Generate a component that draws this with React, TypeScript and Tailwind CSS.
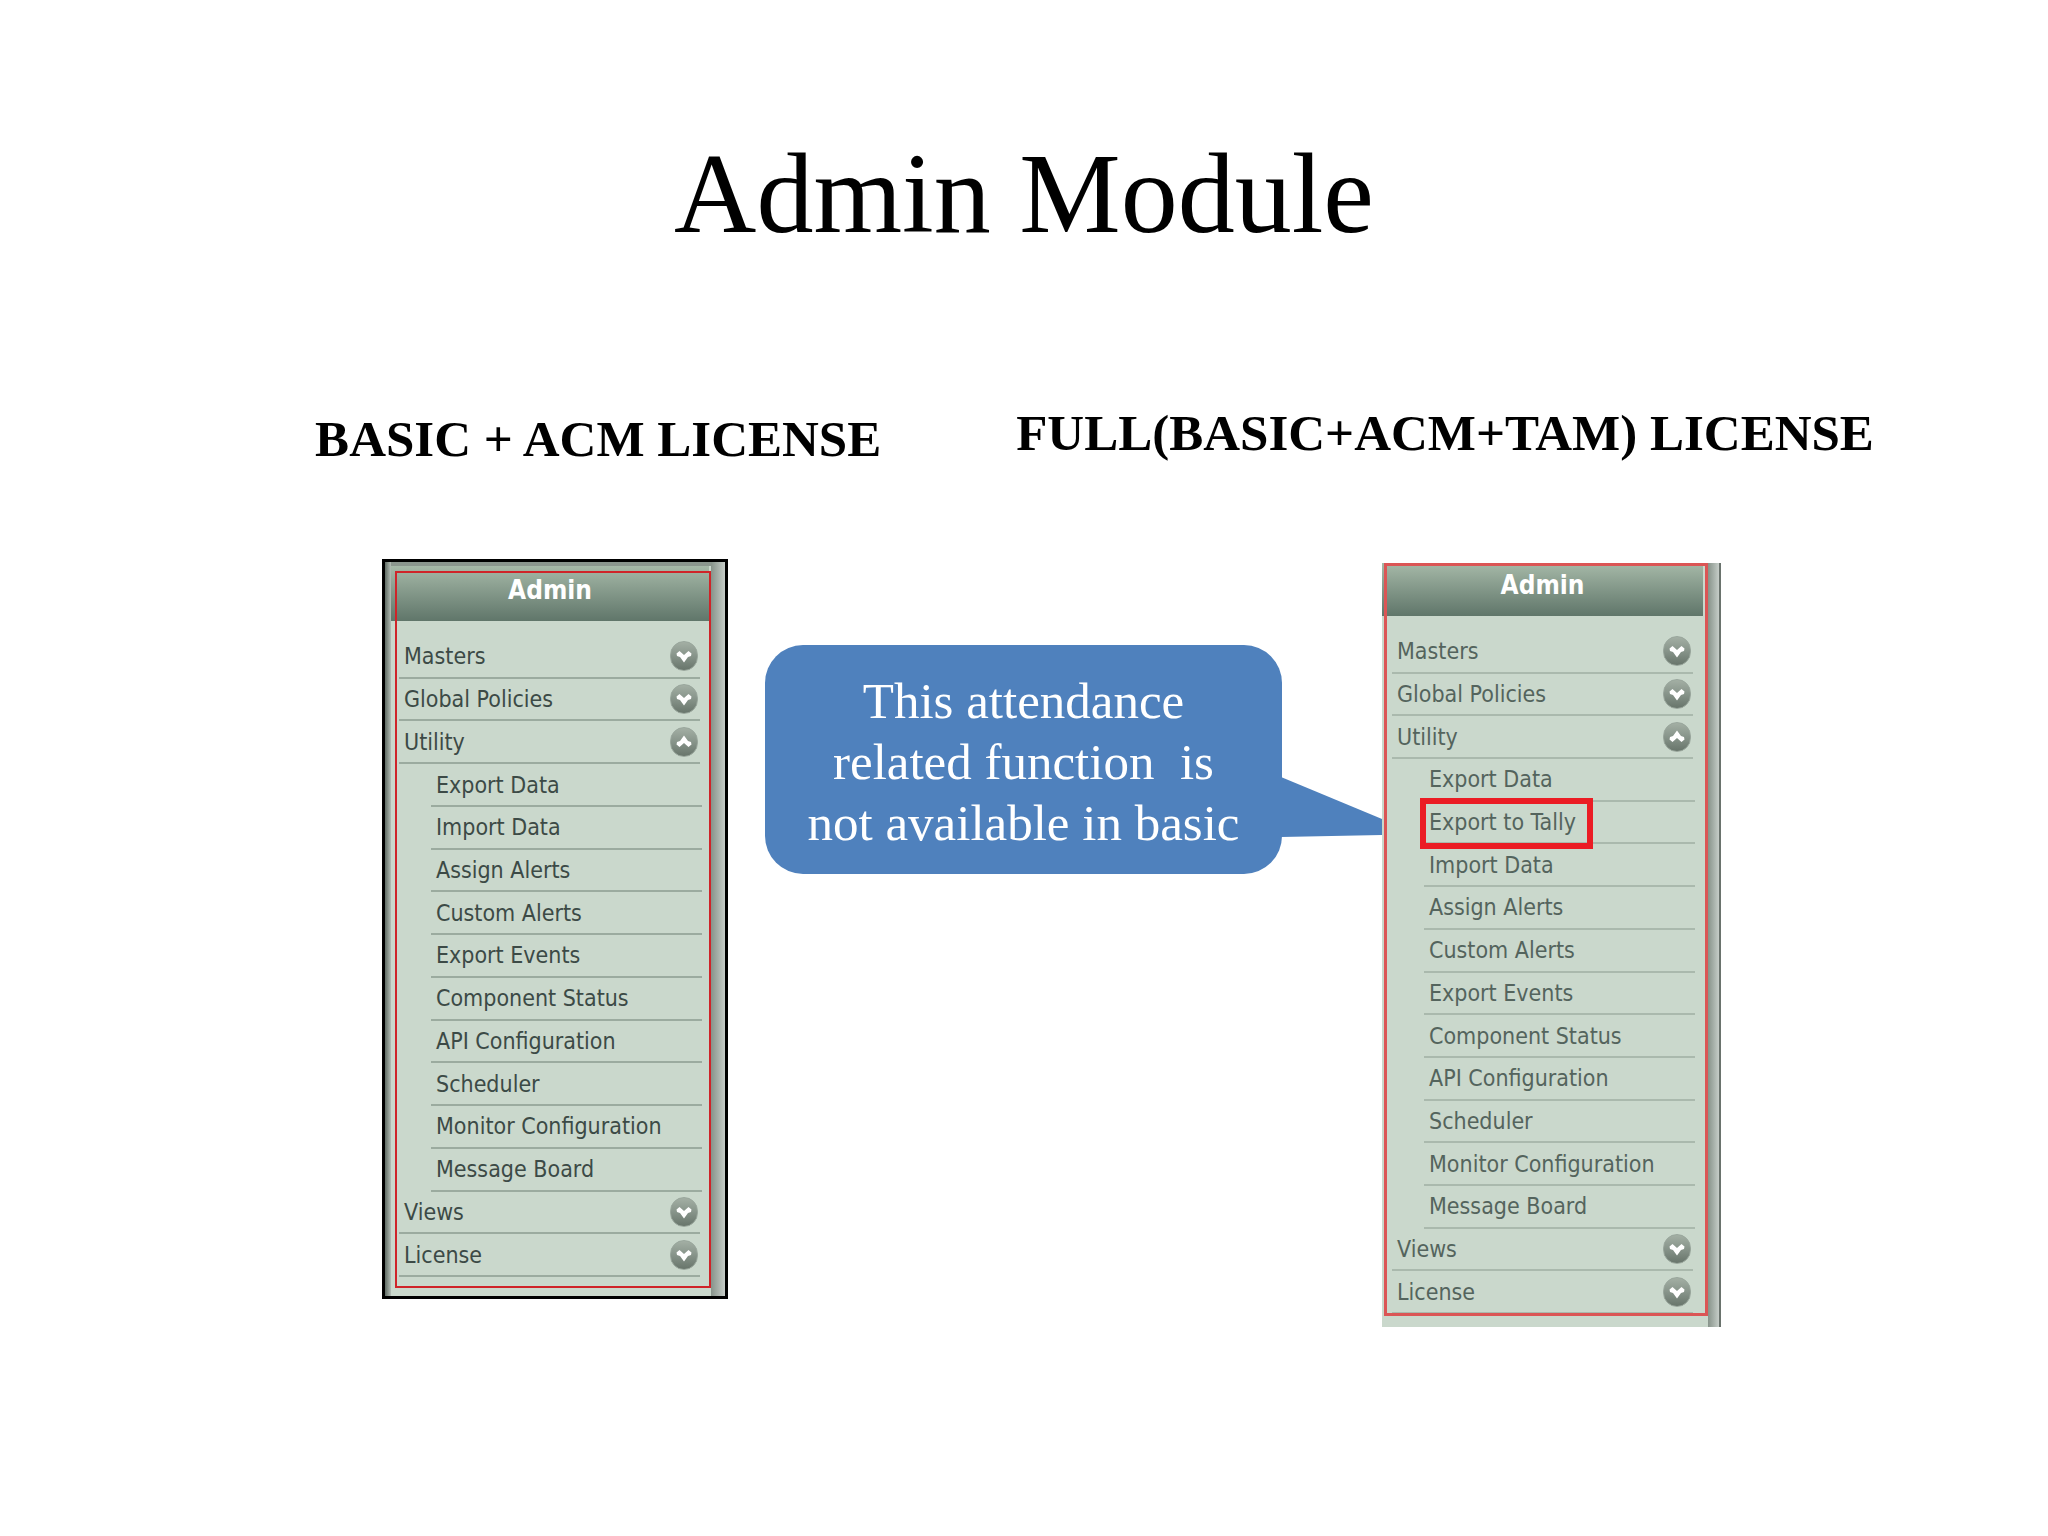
import { clsx } from "clsx";

type MenuItem = {
  label: string;
  kind: "group" | "child";
  open?: boolean;
  highlighted?: boolean;
};

const basicMenu: MenuItem[] = [
  { label: "Masters", kind: "group" },
  { label: "Global Policies", kind: "group" },
  { label: "Utility", kind: "group", open: true },
  { label: "Export Data", kind: "child" },
  { label: "Import Data", kind: "child" },
  { label: "Assign Alerts", kind: "child" },
  { label: "Custom Alerts", kind: "child" },
  { label: "Export Events", kind: "child" },
  { label: "Component Status", kind: "child" },
  { label: "API Configuration", kind: "child" },
  { label: "Scheduler", kind: "child" },
  { label: "Monitor Configuration", kind: "child" },
  { label: "Message Board", kind: "child" },
  { label: "Views", kind: "group" },
  { label: "License", kind: "group" },
];

const fullMenu: MenuItem[] = [
  ...basicMenu.slice(0, 4),
  { label: "Export to Tally", kind: "child", highlighted: true },
  ...basicMenu.slice(4),
];

function ToggleIcon({ open }: { open?: boolean }) {
  return (
    <svg
      viewBox="0 0 26 28"
      className="h-[30px] w-7 rounded-full border border-[#99a69c] bg-linear-to-b from-[#a3afa4] via-[#87948a] to-[#68756b]"
      aria-hidden="true"
    >
      <path
        d="M5.500 11.500 L8.500 9 L13 13 L17.500 9 L20.500 11.500 L20 14 L17 15 L13 20.500 L9 15 L6 14 Z"
        fill="#fff"
        transform={open ? "rotate(180 13 14)" : undefined}
      />
    </svg>
  );
}

function MenuRow({ item }: { item: MenuItem }) {
  if (item.kind === "group") {
    return (
      <li className="mr-[2px] border-b-2 border-inherit">
        <button
          type="button"
          aria-expanded={!!item.open}
          className="flex h-full w-full items-center justify-between pr-[2px] pl-[5px]"
        >
          <span>{item.label}</span>
          <ToggleIcon open={item.open} />
        </button>
      </li>
    );
  }

  return (
    <li className="relative ml-8 flex items-center border-b-2 border-inherit">
      <a href="#" className="pl-[5px]">
        {item.label}
      </a>
      {item.highlighted && <span className="absolute -top-1 -left-1 h-[51px] w-[173px] border-6 border-[#eb1c24]" />}
    </li>
  );
}

function MenuList({ items, className }: { items: MenuItem[]; className: string }) {
  return (
    <ul
      className={clsx(
        "grid w-[303px] auto-rows-fr font-['DejaVu_Sans_Condensed','DejaVu_Sans',sans-serif] text-[23px] leading-7 [font-stretch:condensed]",
        className,
      )}
    >
      {items.map((item) => (
        <MenuRow key={item.label} item={item} />
      ))}
    </ul>
  );
}

const panelTitle =
  "bg-linear-to-b from-[#a6b9a8] to-[#60766a] text-center font-['DejaVu_Sans_Condensed','DejaVu_Sans',sans-serif] text-[26px] font-bold text-white";

function BasicPanel() {
  return (
    <nav
      aria-label="Basic license menu"
      className="relative flex h-[740px] w-[346px] shrink-0 border-[3px] border-black bg-[#cad8cc]"
    >
      <div className="w-[6px] bg-linear-to-r from-[#5f6b63] to-[#b4beb6]" />
      <div className="flex-1 border-t-4 border-[#8b968e]">
        <h3 className={clsx(panelTitle, "mr-[2px] h-[55px] leading-[48px]")}>Admin</h3>
        <MenuList items={basicMenu} className="mt-[15px] ml-2 h-[641px] border-[#9bab9f] text-[#3c4a46]" />
      </div>
      <div className="w-[14px] bg-linear-to-r from-[#87938a] to-[#c6cdc8]" />
      <div className="pointer-events-none absolute top-[9px] left-[10px] h-[717px] w-[316px] border-2 border-[#cf2429]" />
    </nav>
  );
}

function FullPanel() {
  return (
    <nav aria-label="Full license menu" className="relative mt-1 flex h-[764px] w-[339px] shrink-0 bg-[#cad8cc]">
      <div className="flex-1">
        <h3 className={clsx(panelTitle, "mr-[5px] h-[53px] leading-[44px]")}>Admin</h3>
        <MenuList items={fullMenu} className="mt-[15px] ml-[10px] h-[683px] border-[#aab9ad] text-[#54645d]" />
      </div>
      <div className="w-[11px] bg-linear-to-r from-[#87938a] to-[#c6cdc8]" />
      <div className="w-[2px] bg-[#6a736d]" />
      <div className="pointer-events-none absolute top-0 left-[2px] h-[753px] w-[324px] border-[3px] border-[#db5555]" />
    </nav>
  );
}

function Callout() {
  return (
    <div className="relative mt-[86px] mr-[100px] ml-[37px] h-[229px] w-[517px] shrink-0 rounded-[38px] bg-[#4f81bd] pt-[26px] text-center text-[51px] leading-[61px] whitespace-pre text-white">
      <p>{"This attendance\nrelated function  is\nnot available in basic"}</p>
      <svg viewBox="0 0 101 60" className="absolute top-[132px] left-full -ml-px h-[60px] w-[101px]" aria-hidden="true">
        <path d="M0 0 L101 42 L101 58 L0 60 Z" fill="#4f81bd" />
      </svg>
    </div>
  );
}

export default function App() {
  return (
    <main className="min-h-screen w-full bg-white pt-[128px] font-['Liberation_Serif',serif] text-black">
      <h1 className="text-center text-[114px] leading-[132px]">Admin Module</h1>
      <div className="mt-[144px] flex justify-center gap-[135px] pl-[141px] text-[51px] leading-[58px] font-bold whitespace-nowrap">
        <h2 className="pt-[6px]">BASIC + ACM LICENSE</h2>
        <h2>FULL(BASIC+ACM+TAM) LICENSE</h2>
      </div>
      <div className="mt-[91px] flex justify-center pl-[55px]">
        <BasicPanel />
        <Callout />
        <FullPanel />
      </div>
    </main>
  );
}
